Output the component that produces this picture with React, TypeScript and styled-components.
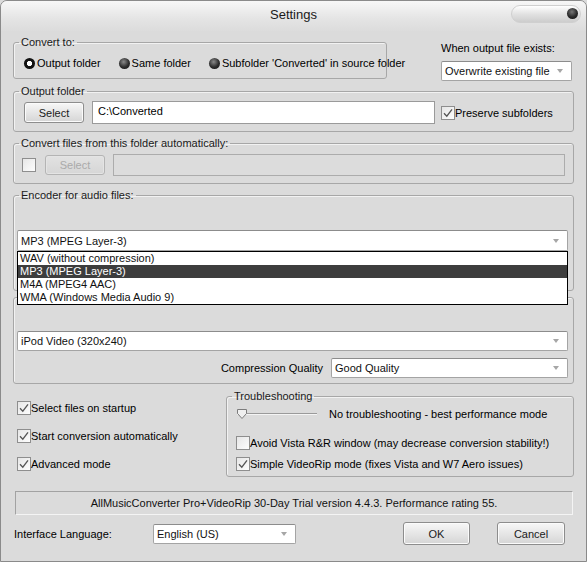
import React from 'react';
import styled, { createGlobalStyle } from 'styled-components';

const GlobalStyle = createGlobalStyle`
  html, body {
    margin: 0;
    padding: 0;
    background: #dbdbdb;
  }
  body {
    font-family: 'Liberation Sans', Arial, sans-serif;
    font-size: 11px;
    line-height: 14px;
    color: #000;
  }
`;

const Window = styled.div`
  box-sizing: border-box;
  width: 587px;
  height: 562px;
  border: 1px solid #8a8a8a;
  border-radius: 7px 7px 0 0;
  background: #dbdbdb;
  overflow: hidden;
`;

const TitleBar = styled.div`
  height: 30px;
  display: grid;
  grid-template-columns: 1fr auto 1fr;
  align-items: center;
  background: linear-gradient(#f7f7f7, #e4e4e4 60%, #dcdcdc);
`;

const Title = styled.div`
  grid-column: 2;
  font-size: 13px;
  color: #1a1a1a;
  margin-top: -2px;
`;

const ClosePill = styled.div`
  grid-column: 3;
  justify-self: end;
  margin-right: 5px;
  margin-top: -5px;
  width: 66px;
  height: 16px;
  border: 1px solid #cfcfcf;
  border-radius: 9px;
  background: linear-gradient(#ffffff, #e2e2e2 50%, #cdcdcd);
  display: flex;
  align-items: center;
  justify-content: flex-end;
  padding-right: 2px;
`;

const CloseBall = styled.div`
  width: 11px;
  height: 11px;
  border-radius: 50%;
  background: radial-gradient(circle at 45% 35%, #777, #2a2a2a 55%, #111);
`;

const Body = styled.div`
  padding: 4px 12px 0 12px;
  display: flex;
  flex-direction: column;
`;

const Row = styled.div`
  display: flex;
  align-items: flex-start;
`;

const Group = styled.fieldset<{ $h: number; $w?: number; $mt?: number }>`
  box-sizing: border-box;
  margin: ${({ $mt }) => $mt ?? 0}px 0 0 0;
  padding: 0;
  min-width: 0;
  height: ${({ $h }) => $h}px;
  width: ${({ $w }) => ($w ? `${$w}px` : 'auto')};
  border: 1px solid #a7a7a7;
  border-radius: 3px;
  box-shadow: inset 1px 1px 0 #f2f2f2;
`;

const Legend = styled.legend`
  margin-left: 5px;
  padding: 0 2px;
  line-height: 14px;
  height: 14px;
  color: #1a1a1a;
`;

const Inner = styled.div<{ $pt: number; $pl: number; $pr?: number }>`
  padding: ${({ $pt }) => $pt}px ${({ $pr }) => $pr ?? 0}px 0 ${({ $pl }) => $pl}px;
  display: flex;
  flex-direction: column;
`;

const Line = styled.div<{ $gap?: number }>`
  display: flex;
  align-items: center;
  gap: ${({ $gap }) => $gap ?? 0}px;
`;

const RadioItem = styled.label`
  display: flex;
  align-items: center;
  gap: 2px;
  margin-right: 18px;
  height: 14px;
  white-space: nowrap;
`;

const RadioDot = styled.span<{ $on?: boolean }>`
  width: 11px;
  height: 11px;
  flex-shrink: 0;
  border-radius: 50%;
  background: ${({ $on }) =>
    $on
      ? 'radial-gradient(circle, #fff 0 2.4px, #111 2.9px)'
      : 'radial-gradient(circle at 42% 35%, #8a8a8a, #2c2c2c 55%, #141414)'};
`;

const SideColumn = styled.div`
  margin-left: 54px;
  width: 131px;
  padding-top: 6px;
  display: flex;
  flex-direction: column;
  gap: 6px;
`;

const Combo = styled.div<{ $w?: number; $h?: number }>`
  box-sizing: border-box;
  width: ${({ $w }) => ($w ? `${$w}px` : '100%')};
  height: ${({ $h }) => $h ?? 20}px;
  background: #fff;
  border: 1px solid #a4a4a4;
  border-top-color: #8c8c8c;
  border-radius: 2px;
  display: flex;
  align-items: center;
  justify-content: space-between;
  padding: 0 8px 0 3px;
  color: #111;
  flex-shrink: 0;
`;

const Arrow = styled.span`
  width: 0;
  height: 0;
  border-left: 3.5px solid transparent;
  border-right: 3.5px solid transparent;
  border-top: 4px solid #a6a6a6;
`;

const Button = styled.div<{ $w: number; $h?: number; $disabled?: boolean }>`
  box-sizing: border-box;
  width: ${({ $w }) => $w}px;
  height: ${({ $h }) => $h ?? 21}px;
  border: 1px solid ${({ $disabled }) => ($disabled ? '#b4b4b4' : '#8d8d8d')};
  border-radius: 3px;
  background: ${({ $disabled }) =>
    $disabled
      ? 'linear-gradient(#e2e2e2, #d6d6d6)'
      : 'linear-gradient(#f7f7f7, #e6e6e6 50%, #d5d5d5)'};
  box-shadow: inset 0 0 0 1px ${({ $disabled }) => ($disabled ? '#e4e4e4' : '#fbfbfb')};
  color: ${({ $disabled }) => ($disabled ? '#aaaaaa' : '#1a1a1a')};
  display: flex;
  align-items: center;
  justify-content: center;
  flex-shrink: 0;
`;

const TextBox = styled.div<{ $w: number; $h?: number; $disabled?: boolean }>`
  box-sizing: border-box;
  width: ${({ $w }) => $w}px;
  height: ${({ $h }) => $h ?? 23}px;
  border: 1px solid ${({ $disabled }) => ($disabled ? '#acacac' : '#9a9a9a')};
  background: ${({ $disabled }) => ($disabled ? '#dcdcdc' : '#fff')};
  padding: 2px 5px;
  display: flex;
  align-items: flex-start;
  flex-shrink: 0;
`;

const CheckItem = styled.label<{ $mt?: number; $ml?: number }>`
  display: flex;
  align-items: center;
  height: 15px;
  white-space: nowrap;
  margin-top: ${({ $mt }) => $mt ?? 0}px;
  margin-left: ${({ $ml }) => $ml ?? 0}px;
`;

const CheckBoxEl = styled.span`
  box-sizing: border-box;
  width: 14px;
  height: 14px;
  border: 1px solid #8e8e8e;
  background: linear-gradient(135deg, #e6e6e6, #fdfdfd);
  display: flex;
  align-items: center;
  justify-content: center;
  flex-shrink: 0;
`;

const Check = ({ on }: { on?: boolean }) => (
  <CheckBoxEl>
    {on && (
      <svg width="10" height="10" viewBox="0 0 10 10">
        <path d="M1 5.2 L3.8 8.2 L9 1.4" fill="none" stroke="#555" strokeWidth="1.3" />
      </svg>
    )}
  </CheckBoxEl>
);

const PopupAnchor = styled.div`
  position: relative;
`;

const PopupList = styled.div`
  position: absolute;
  top: 100%;
  left: 0;
  right: 0;
  z-index: 5;
  background: #fff;
  border: 1px solid #000;
  display: flex;
  flex-direction: column;
`;

const PopupItem = styled.div<{ $active?: boolean }>`
  height: 13px;
  line-height: 13px;
  padding-left: 2px;
  background: ${({ $active }) => ($active ? '#3d3d3d' : 'transparent')};
  color: ${({ $active }) => ($active ? '#fff' : '#111')};
`;

const RightLine = styled.div`
  display: flex;
  align-items: center;
  justify-content: flex-end;
  gap: 8px;
  margin-top: 7px;
`;

const Bottom = styled.div`
  display: flex;
  margin-top: 5px;
`;

const LeftChecks = styled.div`
  width: 213px;
  padding: 11px 0 0 4px;
  box-sizing: border-box;
  display: flex;
  flex-direction: column;
  gap: 13px;
`;

const SliderRow = styled.div`
  display: flex;
  align-items: center;
  height: 12px;
  gap: 11px;
  margin-bottom: 15px;
`;

const StatusBar = styled.div`
  box-sizing: border-box;
  margin: 14px 0 0 2px;
  width: 558px;
  height: 24px;
  border: 1px solid;
  border-color: #a2a2a2 #f4f4f4 #f4f4f4 #a2a2a2;
  display: flex;
  align-items: center;
  justify-content: center;
  color: #111;
`;

const Footer = styled.div`
  display: flex;
  align-items: center;
  margin-top: 7px;
  height: 23px;
  padding: 0 9px 0 1px;
`;

const FooterLabel = styled.div`
  width: 139px;
`;

const Spacer = styled.div`
  flex: 1;
`;

const Gap = styled.div<{ $w: number }>`
  width: ${({ $w }) => $w}px;
  flex-shrink: 0;
`;

export default function App() {
  return (
    <>
      <GlobalStyle />
      <Window>
        <TitleBar>
          <Title>Settings</Title>
          <ClosePill>
            <CloseBall />
          </ClosePill>
        </TitleBar>
        <Body>
          <Row>
            <Group $h={44} $w={374}>
              <Legend>Convert to:</Legend>
              <Inner $pt={7} $pl={10}>
                <Line>
                  <RadioItem>
                    <RadioDot $on />
                    Output folder
                  </RadioItem>
                  <RadioItem>
                    <RadioDot />
                    Same folder
                  </RadioItem>
                  <RadioItem>
                    <RadioDot />
                    Subfolder 'Converted' in source folder
                  </RadioItem>
                </Line>
              </Inner>
            </Group>
            <SideColumn>
              <div>When output file exists:</div>
              <Combo>
                Overwrite existing file
                <Arrow />
              </Combo>
            </SideColumn>
          </Row>

          <Group $h={48} $mt={3}>
            <Legend>Output folder</Legend>
            <Inner $pt={3} $pl={10}>
              <Line $gap={8}>
                <Button $w={60}>Select</Button>
                <TextBox $w={343}>C:\Converted</TextBox>
                <CheckItem $ml={-2}>
                  <Check on />
                  Preserve subfolders
                </CheckItem>
              </Line>
            </Inner>
          </Group>

          <Group $h={48} $mt={4}>
            <Legend>Convert files from this folder automatically:</Legend>
            <Inner $pt={4} $pl={8}>
              <Line>
                <Check />
                <Gap $w={9} />
                <Button $w={60} $h={20} $disabled>
                  Select
                </Button>
                <Gap $w={8} />
                <TextBox $w={452} $h={22} $disabled />
              </Line>
            </Inner>
          </Group>

          <Group $h={103} $mt={4}>
            <Legend>Encoder for audio files:</Legend>
            <Inner $pt={28} $pl={3} $pr={5}>
              <PopupAnchor>
                <Combo $h={21}>
                  MP3 (MPEG Layer-3)
                  <Arrow />
                </Combo>
                <PopupList>
                  <PopupItem>WAV (without compression)</PopupItem>
                  <PopupItem $active>MP3 (MPEG Layer-3)</PopupItem>
                  <PopupItem>M4A (MPEG4 AAC)</PopupItem>
                  <PopupItem>WMA (Windows Media Audio 9)</PopupItem>
                </PopupList>
              </PopupAnchor>
            </Inner>
          </Group>

          <Group $h={87} $mt={6}>
            <Inner $pt={33} $pl={3} $pr={5}>
              <Combo>
                iPod Video (320x240)
                <Arrow />
              </Combo>
              <RightLine>
                Compression Quality
                <Combo $w={237}>
                  Good Quality
                  <Arrow />
                </Combo>
              </RightLine>
            </Inner>
          </Group>

          <Bottom>
            <LeftChecks>
              <CheckItem>
                <Check on />
                Select files on startup
              </CheckItem>
              <CheckItem>
                <Check on />
                Start conversion automatically
              </CheckItem>
              <CheckItem>
                <Check on />
                Advanced mode
              </CheckItem>
            </LeftChecks>
            <Group $h={88} $w={348}>
              <Legend>Troubleshooting</Legend>
              <Inner $pt={5} $pl={9}>
                <SliderRow>
                  <svg width="82" height="12" viewBox="0 0 82 12">
                    <line x1="1" y1="5.5" x2="81" y2="5.5" stroke="#9a9a9a" />
                    <line x1="1" y1="6.5" x2="81" y2="6.5" stroke="#f4f4f4" />
                    <path d="M1.5 1.5 H10.5 V5.5 L6 10.5 L1.5 5.5 Z" fill="#efefef" stroke="#7c7c7c" />
                  </svg>
                  No troubleshooting - best performance mode
                </SliderRow>
                <CheckItem>
                  <Check />
                  Avoid Vista R&amp;R window (may decrease conversion stability!)
                </CheckItem>
                <CheckItem $mt={6}>
                  <Check on />
                  Simple VideoRip mode (fixes Vista and W7 Aero issues)
                </CheckItem>
              </Inner>
            </Group>
          </Bottom>

          <StatusBar>
            AllMusicConverter Pro+VideoRip 30-Day Trial version 4.4.3. Performance rating 55.
          </StatusBar>

          <Footer>
            <FooterLabel>Interface Language:</FooterLabel>
            <Combo $w={143}>
              English (US)
              <Arrow />
            </Combo>
            <Spacer />
            <Button $w={67} $h={23}>
              OK
            </Button>
            <Gap $w={27} />
            <Button $w={68} $h={23}>
              Cancel
            </Button>
          </Footer>
        </Body>
      </Window>
    </>
  );
}
